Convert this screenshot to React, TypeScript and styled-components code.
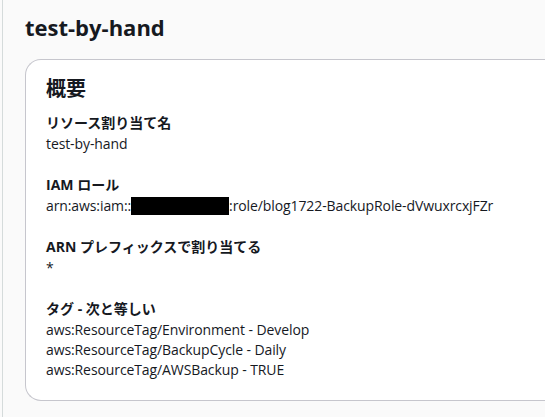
import React from "react";
import styled, { createGlobalStyle } from "styled-components";

const Global = createGlobalStyle`
  html, body { margin: 0; padding: 0; background: #fafafa; }
  body { font-family: "Open Sans", "Noto Sans CJK JP", sans-serif; color: #16191f; }
`;

const Page = styled.div`
  margin-left: 2px;
  border-left: 1px solid #d5dbdb;
  min-height: 417px;
  box-sizing: border-box;
  padding: 12px 0 0 22px;
  overflow: hidden;
`;

const Title = styled.h1`
  margin: 0 0 17px 0;
  font-size: 22px;
  line-height: 30px;
  font-weight: 700;
  color: #16191f;
`;

const Card = styled.section`
  background: #ffffff;
  border: 1px solid #c6c6cd;
  border-right: none;
  border-radius: 16px 0 0 16px;
  padding: 16px 0 20px 20px;
  margin-right: -20px;
`;

const CardHeading = styled.h2`
  margin: 0 0 10px 0;
  font-size: 20px;
  line-height: 26px;
  font-weight: 700;
`;

const Field = styled.div`
  display: flex;
  flex-direction: column;
  & + & { margin-top: 20px; }
`;

const Label = styled.div`
  font-size: 14px;
  line-height: 22px;
  font-weight: 700;
`;

const Value = styled.div`
  font-size: 14px;
  line-height: 20px;
  font-weight: 400;
  white-space: nowrap;
  letter-spacing: -0.1px;
`;

const Redact = styled.span`
  display: inline-block;
  width: 98px;
  height: 18px;
  background: #000;
  vertical-align: -4px;
`;

export default function App() {
  return (
    <>
      <Global />
      <Page>
        <Title>test-by-hand</Title>
        <Card>
          <CardHeading>概要</CardHeading>
          <Field>
            <Label>リソース割り当て名</Label>
            <Value>test-by-hand</Value>
          </Field>
          <Field>
            <Label>IAM ロール</Label>
            <Value>
              arn:aws:iam::<Redact />:role/blog1722-BackupRole-dVwuxrcxjFZr
            </Value>
          </Field>
          <Field>
            <Label>ARN プレフィックスで割り当てる</Label>
            <Value>*</Value>
          </Field>
          <Field>
            <Label>タグ - 次と等しい</Label>
            <Value>aws:ResourceTag/Environment - Develop</Value>
            <Value>aws:ResourceTag/BackupCycle - Daily</Value>
            <Value>aws:ResourceTag/AWSBackup - TRUE</Value>
          </Field>
        </Card>
      </Page>
    </>
  );
}
